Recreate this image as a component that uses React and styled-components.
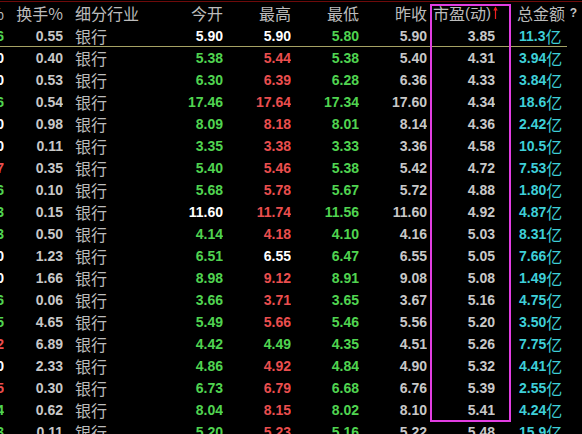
import styled, { createGlobalStyle } from 'styled-components';

const GlobalStyle = createGlobalStyle`
  html, body {
    margin: 0;
    padding: 0;
    background: #000;
    overflow: hidden;
  }
`;

const palette = {
  g: '#50d450',
  r: '#ea4e4e',
  w: '#ffffff',
  n: '#c8c8c8',
};

// [edge, edgeColor, turnover, open, oc, high, hc, low, lc, prevClose, pe, amount]
const rows = [
  ['6', 'g', '0.55', '5.90', 'w', '5.90', 'w', '5.80', 'g', '5.90', '3.85', '11.3'],
  ['0', 'w', '0.40', '5.38', 'g', '5.44', 'r', '5.38', 'g', '5.40', '4.31', '3.94'],
  ['0', 'w', '0.53', '6.30', 'g', '6.39', 'r', '6.28', 'g', '6.36', '4.33', '3.84'],
  ['6', 'g', '0.54', '17.46', 'g', '17.64', 'r', '17.34', 'g', '17.60', '4.34', '18.6'],
  ['0', 'w', '0.98', '8.09', 'g', '8.18', 'r', '8.01', 'g', '8.14', '4.36', '2.42'],
  ['0', 'w', '0.11', '3.35', 'g', '3.38', 'r', '3.33', 'g', '3.36', '4.58', '10.5'],
  ['7', 'r', '0.35', '5.40', 'g', '5.46', 'r', '5.38', 'g', '5.42', '4.72', '7.53'],
  ['6', 'g', '0.10', '5.68', 'g', '5.78', 'r', '5.67', 'g', '5.72', '4.88', '1.80'],
  ['3', 'g', '0.15', '11.60', 'w', '11.74', 'r', '11.56', 'g', '11.60', '4.92', '4.87'],
  ['3', 'g', '0.50', '4.14', 'g', '4.18', 'r', '4.10', 'g', '4.16', '5.03', '8.31'],
  ['0', 'w', '1.23', '6.51', 'g', '6.55', 'w', '6.47', 'g', '6.55', '5.05', '7.66'],
  ['0', 'w', '1.66', '8.98', 'g', '9.12', 'r', '8.91', 'g', '9.08', '5.08', '1.49'],
  ['6', 'g', '0.06', '3.66', 'g', '3.71', 'r', '3.65', 'g', '3.67', '5.16', '4.75'],
  ['5', 'g', '4.65', '5.49', 'g', '5.66', 'r', '5.46', 'g', '5.56', '5.20', '3.50'],
  ['2', 'r', '6.89', '4.42', 'g', '4.49', 'g', '4.35', 'g', '4.51', '5.26', '7.75'],
  ['0', 'w', '2.33', '4.86', 'g', '4.92', 'r', '4.84', 'g', '4.90', '5.32', '4.41'],
  ['5', 'r', '0.30', '6.73', 'g', '6.79', 'r', '6.68', 'g', '6.76', '5.39', '2.55'],
  ['4', 'g', '0.62', '8.04', 'g', '8.15', 'r', '8.02', 'g', '8.10', '5.41', '4.24'],
  ['3', 'g', '0.11', '5.20', 'g', '5.23', 'r', '5.16', 'g', '5.22', '5.48', '15.9'],
];

const cjk = `"Noto Sans CJK SC", "Noto Sans", sans-serif`;
const num = `"Liberation Sans", Arial, sans-serif`;

const Board = styled.div`
  position: relative;
  width: 582px;
  height: 434px;
  padding-top: 1px;
  box-sizing: border-box;
  background: #000;
  overflow: hidden;
`;

const Line = styled.div`
  display: grid;
  grid-template-columns: 4px 59px 97px 63px 68px 68px 68px 68px 1fr;
  height: ${(p) => p.$h}px;
  align-items: center;
  white-space: nowrap;
`;

const HeadLine = styled(Line)`
  border-top: 1px solid #6e0a0a;
`;

const FirstLine = styled(Line)`
  border-bottom: 1px solid #a6a264;
  margin-right: 15px;
`;

const Cell = styled.div`
  display: flex;
  justify-content: ${(p) => (p.$left ? 'flex-start' : 'flex-end')};
  align-items: center;
  overflow: ${(p) => (p.$open ? 'visible' : 'hidden')};
  padding-left: ${(p) => p.$pl || 0}px;
  padding-right: ${(p) => p.$pr || 0}px;
  font-family: ${num};
  font-weight: bold;
  font-size: 14px;
  color: ${(p) => palette[p.$c || 'n']};
`;

const Head = styled(Cell)`
  font-family: ${cjk};
  font-weight: normal;
  font-size: 16px;
  color: #bcbcbc;
  margin-top: -2px;
`;

const Text = styled(Cell)`
  font-family: ${cjk};
  font-weight: normal;
  font-size: 16px;
  color: #bcbcbc;
`;

const Amount = styled(Cell)`
  color: #3ecfd8;
`;

const Unit = styled.span`
  font-family: ${cjk};
  font-weight: normal;
  font-size: 16px;
`;

const Paren = styled.span`
  font-family: ${num};
  font-size: 15px;
`;

const SortArrow = styled.svg`
  width: 5px;
  height: 13px;
  margin-left: 2px;
  margin-right: -3px;
  flex: none;
`;

const Help = styled.span`
  margin-left: auto;
  font-family: ${num};
  font-weight: bold;
  font-size: 12px;
  color: #c4c4c4;
`;

const Focus = styled.div`
  position: absolute;
  left: 430px;
  top: 4px;
  width: 81px;
  height: 418px;
  border: 2px solid #e23ee2;
  box-sizing: border-box;
  pointer-events: none;
`;

function DataRow({ row, first }) {
  const [edge, ec, turn, open, oc, high, hc, low, lc, prev, pe, amt] = row;
  const Wrap = first ? FirstLine : Line;
  return (
    <Wrap $h={first ? 21 : 22}>
      <Cell $c={ec}>{edge}</Cell>
      <Cell>{turn}</Cell>
      <Text $left $pl={12}>银行</Text>
      <Cell $c={oc}>{open}</Cell>
      <Cell $c={hc}>{high}</Cell>
      <Cell $c={lc}>{low}</Cell>
      <Cell>{prev}</Cell>
      <Cell>{pe}</Cell>
      <Amount $left $pl={24}>
        {amt}
        <Unit>亿</Unit>
      </Amount>
    </Wrap>
  );
}

export default function App() {
  return (
    <>
      <GlobalStyle />
      <Board>
        <HeadLine $h={23}>
          <Head>%</Head>
          <Head>换手%</Head>
          <Head $left $pl={12}>细分行业</Head>
          <Head>今开</Head>
          <Head>最高</Head>
          <Head>最低</Head>
          <Head>昨收</Head>
          <Head $open>
            市盈<Paren>(</Paren>动<Paren>)</Paren>
            <SortArrow viewBox="0 0 5 13">
              <path d="M2.5 1 L2.5 13" stroke="#f02020" strokeWidth="1.2" />
              <path d="M0.3 4.5 L2.5 0.5 L4.7 4.5 Z" fill="#f02020" />
            </SortArrow>
          </Head>
          <Head $left $open $pl={22} $pr={5}>
            总金额
            <Help>?</Help>
          </Head>
        </HeadLine>
        {rows.map((row, i) => (
          <DataRow key={i} row={row} first={i === 0} />
        ))}
        <Focus />
      </Board>
    </>
  );
}
